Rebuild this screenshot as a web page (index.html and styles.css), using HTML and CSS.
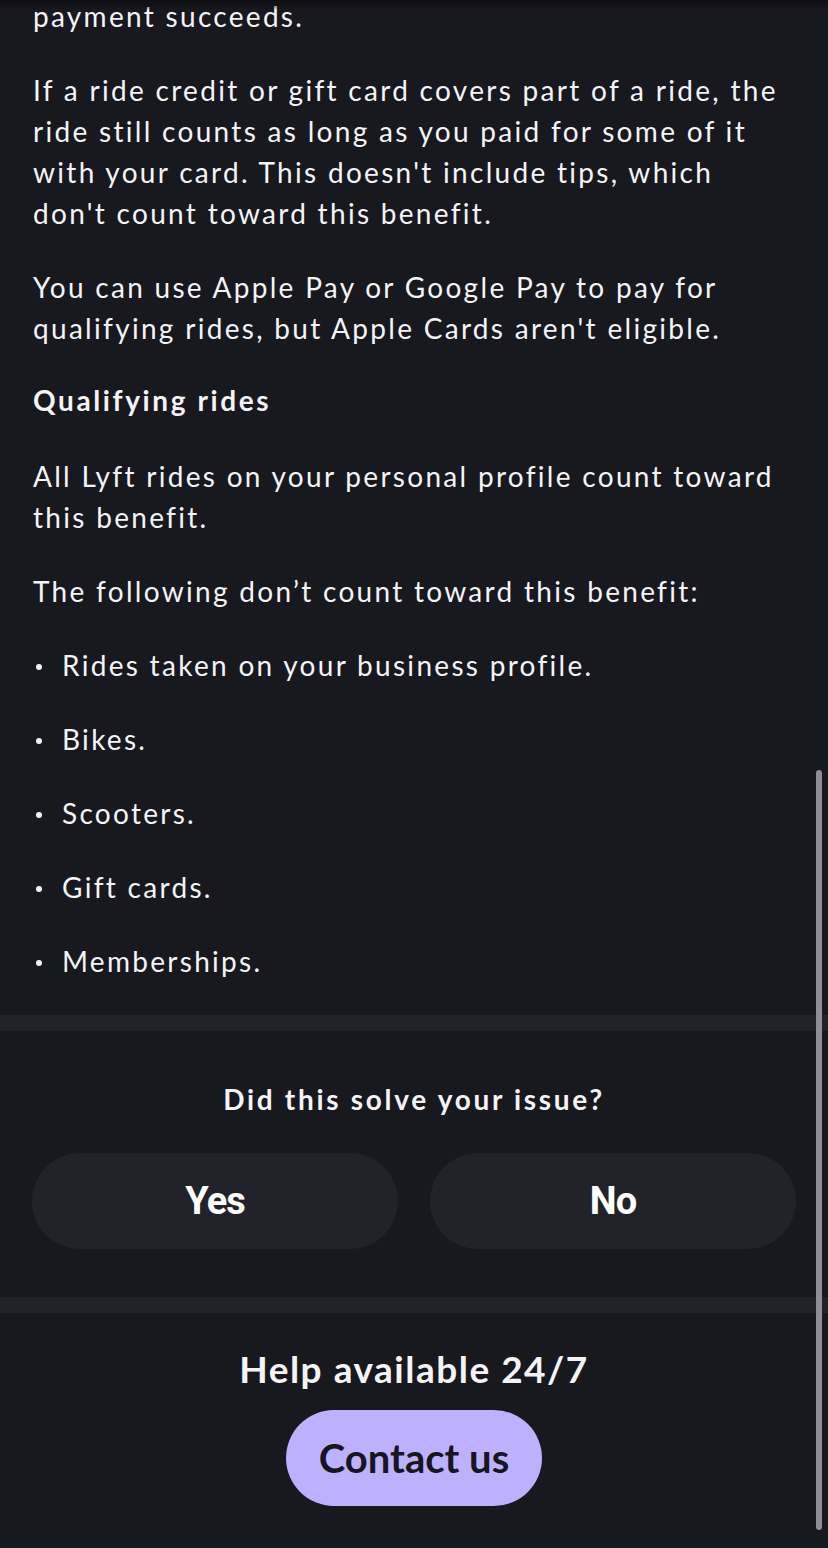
FILE: index.html
```html
<!DOCTYPE html>
<html lang="en">
<head>
<meta charset="utf-8">
<title>Help article</title>
<link rel="stylesheet" href="styles.css">
</head>
<body>
<div class="top-shade"></div>
<main class="article">
  <p class="para first">payment succeeds.</p>
  <p class="para">If a ride credit or gift card covers part of a ride, the ride still counts as long as you paid for some of it with your card. This doesn't include tips, which don't count toward this benefit.</p>
  <p class="para">You can use Apple Pay or Google Pay to pay for qualifying rides, but Apple Cards aren't eligible.</p>
  <h3 class="subhead">Qualifying rides</h3>
  <p class="para">All Lyft rides on your personal profile count toward this benefit.</p>
  <p class="para">The following don’t count toward this benefit:</p>
  <ul class="list">
    <li>Rides taken on your business profile.</li>
    <li>Bikes.</li>
    <li>Scooters.</li>
    <li>Gift cards.</li>
    <li>Memberships.</li>
  </ul>
</main>
<div class="divider"></div>
<section class="feedback">
  <h2 class="feedback-title">Did this solve your issue?</h2>
  <div class="feedback-buttons">
    <button class="pill">Yes</button>
    <button class="pill">No</button>
  </div>
</section>
<div class="divider"></div>
<section class="help">
  <h2 class="help-title">Help available 24/7</h2>
  <button class="contact">Contact us</button>
</section>
<div class="scrollbar"></div>
</body>
</html>
```
FILE: styles.css
```css
* { box-sizing: border-box; }
html, body {
  margin: 0;
  padding: 0;
  background: #18181f;
}
body {
  font-family: "Lato", "Open Sans", sans-serif;
  color: #f4f4f7;
  overflow: hidden;
  height: 1548px;
}
.top-shade {
  position: fixed;
  top: 0; left: 0; right: 0;
  height: 10px;
  background: linear-gradient(#0e0e13, rgba(24,24,31,0));
  pointer-events: none;
}
.article {
  padding: 0 32px 0 33px;
}
.para {
  font-size: 28px;
  line-height: 41px;
  letter-spacing: 2.3px;
  margin: 0 0 33px;
}
.para.first { margin-top: -4px; }
.subhead {
  font-size: 28px;
  line-height: 41px;
  letter-spacing: 2.6px;
  font-weight: 700;
  margin: -2px 0 35px;
}
.list {
  list-style: none;
  margin: 0;
  padding: 0;
}
.list li {
  font-size: 28px;
  line-height: 41px;
  letter-spacing: 2.3px;
  margin-bottom: 33px;
  padding-left: 29px;
  position: relative;
}
.list li::before {
  content: "";
  position: absolute;
  left: 3px;
  top: 19px;
  width: 6px;
  height: 6px;
  border-radius: 50%;
  background: #f4f4f7;
}
.divider {
  height: 16px;
  background: #22222b;
}
.feedback {
  padding: 50px 32px 48px;
}
.feedback-title {
  margin: 0 0 36px;
  text-align: center;
  font-size: 28px;
  line-height: 36px;
  letter-spacing: 2.7px;
  font-weight: 700;
}
.feedback-buttons {
  display: grid;
  grid-template-columns: 1fr 1fr;
  gap: 32px;
}
.pill {
  height: 96px;
  border: 0;
  border-radius: 48px;
  background: #22222b;
  color: #ffffff;
  font-family: "Roboto", "Lato", sans-serif;
  font-weight: 700;
  font-size: 38px;
  letter-spacing: -1px;
}
.help {
  display: flex;
  flex-direction: column;
  align-items: center;
  padding: 34px 0 0;
}
.help-title {
  margin: 0 0 19px;
  font-size: 37px;
  line-height: 44px;
  letter-spacing: 1.5px;
  font-weight: 700;
}
.contact {
  width: 256px;
  height: 96px;
  border: 0;
  border-radius: 48px;
  background: #bdb1ff;
  color: #17161e;
  font-family: "Lato", sans-serif;
  font-weight: 700;
  font-size: 40px;
}
.scrollbar {
  position: fixed;
  left: 816px;
  top: 770px;
  width: 6px;
  height: 760px;
  border-radius: 3px;
  background: #8e8e93;
}
```
